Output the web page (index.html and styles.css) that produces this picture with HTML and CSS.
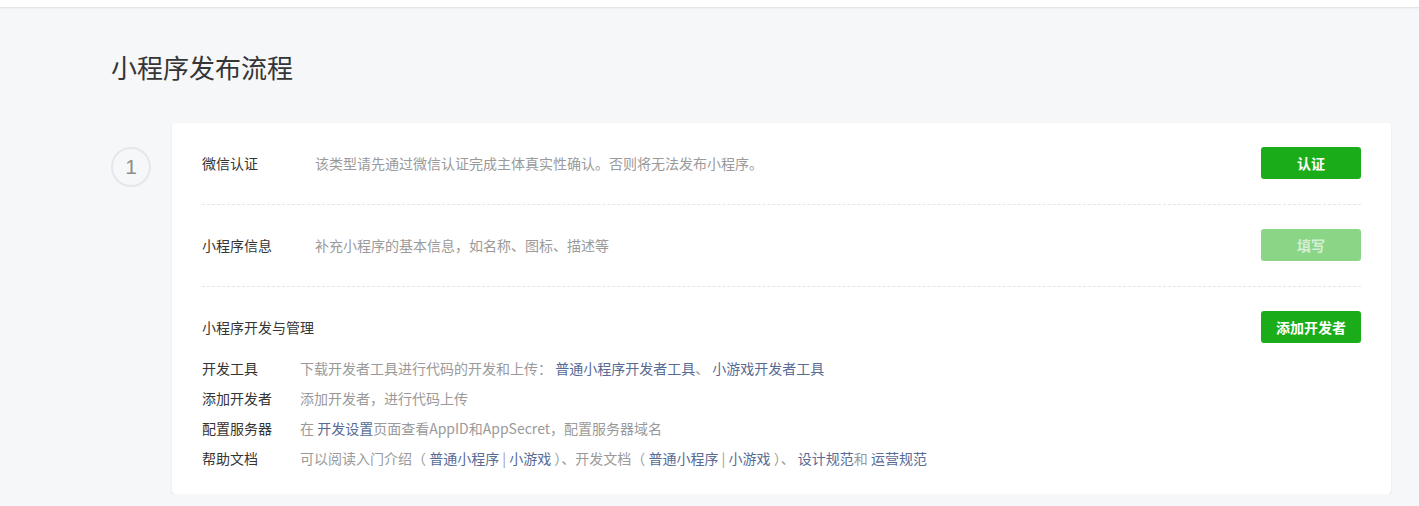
FILE: index.html
```html
<!DOCTYPE html>
<html lang="zh-CN">
<head>
<meta charset="utf-8">
<title>小程序发布流程</title>
<link rel="stylesheet" href="styles.css">
</head>
<body>
<div class="topbar"></div>
<main class="main">
  <h2 class="title">小程序发布流程</h2>
  <div class="step">
    <div class="step-num">1</div>
    <div class="card">
      <div class="section">
        <div class="sec-label">微信认证</div>
        <div class="sec-desc">该类型请先通过微信认证完成主体真实性确认。否则将无法发布小程序。</div>
        <a class="btn">认证</a>
      </div>
      <div class="section">
        <div class="sec-label">小程序信息</div>
        <div class="sec-desc">补充小程序的基本信息，如名称、图标、描述等</div>
        <a class="btn btn-disabled">填写</a>
      </div>
      <div class="section section-last">
        <div class="sec-head">
          <div class="sec-label-wide">小程序开发与管理</div>
          <a class="btn">添加开发者</a>
        </div>
        <ul class="info-list">
          <li><span class="info-label">开发工具</span><span class="info-text">下载开发者工具进行代码的开发和上传： <a class="link">普通小程序开发者工具</a>、 <a class="link">小游戏开发者工具</a></span></li>
          <li><span class="info-label">添加开发者</span><span class="info-text">添加开发者，进行代码上传</span></li>
          <li><span class="info-label">配置服务器</span><span class="info-text">在 <a class="link">开发设置</a>页面查看AppID和AppSecret，配置服务器域名</span></li>
          <li><span class="info-label">帮助文档</span><span class="info-text">可以阅读入门介绍（ <a class="link">普通小程序</a> | <a class="link">小游戏</a> ）、开发文档（ <a class="link">普通小程序</a> | <a class="link">小游戏</a> ）、 <a class="link">设计规范</a>和 <a class="link">运营规范</a></span></li>
        </ul>
      </div>
    </div>
  </div>
</main>
</body>
</html>
```

FILE: styles.css
```css
* { box-sizing: border-box; }
html, body {
  margin: 0;
  padding: 0;
  background: #f6f7f9;
  font-family: "Noto Sans CJK SC", "Microsoft YaHei", sans-serif;
  color: #353535;
  font-size: 14px;
}
.topbar {
  height: 8px;
  background: #fff;
  border-bottom: 1px solid #e4e5e8;
  box-shadow: 0 1px 2px rgba(0,0,0,0.04);
}
.main {
  padding: 0 28px 0 111px;
}
.title {
  margin: 0;
  padding-top: 41px;
  height: 115px;
  font-size: 26px;
  font-weight: 400;
  line-height: 36px;
  color: #353535;
}
.step {
  display: flex;
  align-items: flex-start;
  gap: 21px;
}
.step-num {
  flex: none;
  margin-top: 24px;
  width: 40px;
  height: 40px;
  border: 2px solid #e7e7eb;
  border-radius: 50%;
  display: flex;
  align-items: center;
  justify-content: center;
  font-family: "Liberation Sans", Arial, sans-serif;
  font-size: 21px;
  color: #8d8d8d;
}
.card {
  flex: 1;
  background: #fff;
  border-radius: 4px;
  box-shadow: 0 1px 2px rgba(0,0,0,0.1);
  padding: 0 30px 21px 30px;
}
.section {
  display: flex;
  align-items: center;
  padding: 24px 0 25px;
  border-bottom: 1px dashed #e4e5e8;
}
.section-last {
  display: block;
  border-bottom: none;
  padding-bottom: 0;
}
.sec-label {
  width: 113px;
  flex: none;
  color: #353535;
}
.sec-desc {
  flex: 1;
  color: #9a9a9a;
}
.sec-head {
  display: flex;
  align-items: center;
  justify-content: space-between;
}
.btn {
  flex: none;
  display: inline-flex;
  align-items: center;
  justify-content: center;
  width: 100px;
  height: 32px;
  border-radius: 3px;
  background: #1aad19;
  color: #fff;
  font-weight: 700;
  font-size: 14px;
  cursor: pointer;
}
.btn-disabled {
  background: #8bd586;
  color: #d5efd4;
}
.info-list {
  list-style: none;
  margin: 10px 0 0;
  padding: 0;
}
.info-list li {
  display: flex;
  line-height: 30px;
  height: 30px;
}
.info-label {
  width: 98px;
  flex: none;
  color: #353535;
}
.info-text {
  color: #9a9a9a;
  white-space: nowrap;
}
.link {
  color: #576b95;
  text-decoration: none;
  cursor: pointer;
}
```
